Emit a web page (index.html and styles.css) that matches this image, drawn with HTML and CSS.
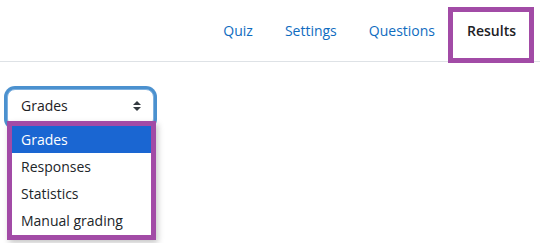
FILE: index.html
```html
<!DOCTYPE html>
<html lang="en">
<head>
<meta charset="utf-8">
<title>Quiz results</title>
<link rel="stylesheet" href="styles.css">
</head>
<body>
  <nav class="secondary-nav">
    <a class="nav-link" href="#">Quiz</a>
    <a class="nav-link" href="#">Settings</a>
    <a class="nav-link" href="#">Questions</a>
    <a class="nav-link active" href="#">Results</a>
  </nav>
  <main class="content">
    <div class="select-wrap">
      <div class="select">
        <span class="select-value">Grades</span>
        <svg class="select-icon" width="8" height="10" viewBox="0 0 4 5" aria-hidden="true"><path d="M2 0L0 2h4zm0 5L0 3h4z" fill="#343a40"/></svg>
      </div>
      <ul class="dropdown">
        <li class="option selected">Grades</li>
        <li class="option">Responses</li>
        <li class="option">Statistics</li>
        <li class="option">Manual grading</li>
      </ul>
    </div>
  </main>
</body>
</html>
```

FILE: styles.css
```css
html, body {
  margin: 0;
  padding: 0;
  background: #ffffff;
}

body {
  box-sizing: border-box;
  min-height: 243px;
  font-family: "Open Sans", "Noto Sans", "Liberation Sans", sans-serif;
  font-size: 14px;
  color: #1d2125;
}

.secondary-nav {
  height: 61px;
  border-bottom: 1px solid #dee2e6;
  display: flex;
  justify-content: flex-end;
  padding-right: 8px;
}

.nav-link {
  position: relative;
  display: flex;
  align-items: center;
  padding: 0 16px;
  color: #0f6cbf;
  text-decoration: none;
  font-size: 14px;
}

.nav-link.active {
  color: #1d2125;
  font-weight: 600;
}

.nav-link.active::after {
  content: "";
  position: absolute;
  top: 7px;
  bottom: -2px;
  left: -3px;
  right: -2px;
  border: 5px solid #a24ba6;
}

.content {
  padding: 27px 0 0 7px;
}

.select-wrap {
  position: relative;
  width: 147px;
}

.select {
  box-sizing: border-box;
  width: 147px;
  height: 38px;
  padding: 0 12px 0 13px;
  display: flex;
  align-items: center;
  justify-content: space-between;
  border: 1px solid #7fb1df;
  border-radius: 8px;
  box-shadow: 0 0 0 3px rgba(15, 108, 191, 0.75);
  background: #ffffff;
  color: #1d2125;
}

.select-value {
  line-height: 1;
  margin-top: -4px;
}

.select-icon {
  display: block;
  margin-top: -4px;
}

.dropdown {
  position: absolute;
  top: 32px;
  left: 0;
  box-sizing: border-box;
  width: 149px;
  margin: 0;
  padding: 0 0 1px;
  list-style: none;
  background: #ffffff;
  border: 5px solid #a24ba6;
  box-shadow: 2px 3px 6px rgba(0, 0, 0, 0.22);
}

.option {
  height: 27px;
  line-height: 27px;
  padding-left: 9px;
  color: #212529;
  white-space: nowrap;
}

.option.selected {
  background: #1a66d2;
  color: #ffffff;
}
```
